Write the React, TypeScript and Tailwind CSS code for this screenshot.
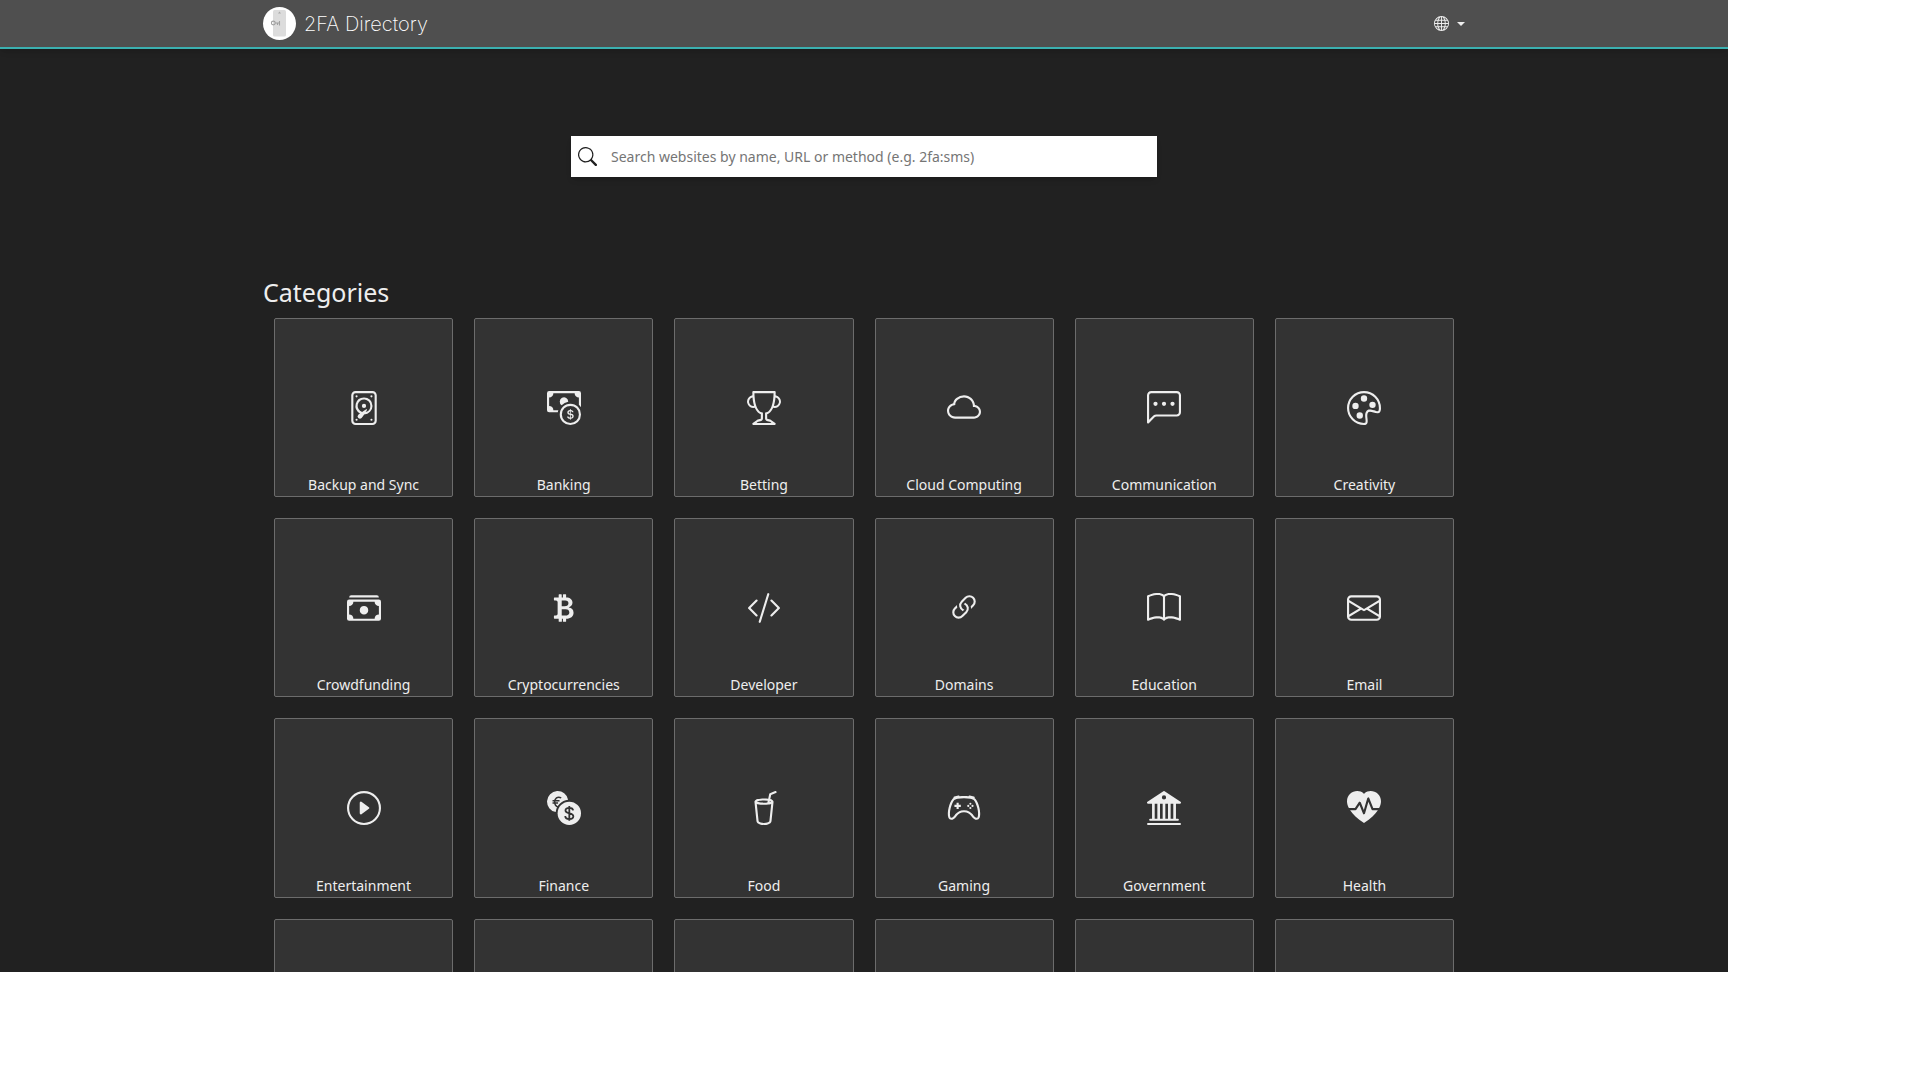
import type { ReactNode } from "react";
import {
  BsBank2,
  BsBook,
  BsCashCoin,
  BsCashStack,
  BsChatLeftDots,
  BsCloud,
  BsCodeSlash,
  BsController,
  BsCupStraw,
  BsCurrencyBitcoin,
  BsDeviceHdd,
  BsEnvelope,
  BsGlobe,
  BsHeartPulseFill,
  BsLink45Deg,
  BsPalette,
  BsPlayCircle,
  BsSearch,
  BsTrophy,
} from "react-icons/bs";

function Logo() {
  return (
    <svg viewBox="0 0 33 33" className="size-[33px]" aria-hidden="true">
      <circle cx="16.5" cy="16.5" r="16.5" fill="#fff" />
      <rect x="10" y="3" width="13" height="26.5" rx="1.5" fill="#dcdcdc" />
      <path d="M15 6.5h3l-1.5-2z" fill="#aaa" />
      <g fill="none" stroke="#a0a0a0" strokeWidth="1.1">
        <circle cx="10.3" cy="16" r="1.9" />
        <path d="M12.2 16h4.8M14.5 16v2M16.5 14v4.5" />
      </g>
    </svg>
  );
}

function Coins() {
  return (
    <svg viewBox="0 0 16 16" className="size-[1em]" fill="currentColor" aria-hidden="true">
      <path d="M9.93 4.1A5 5 0 1 0 4.1 9.93A6.45 6.45 0 0 1 9.93 4.1Z" />
      <circle cx="10.5" cy="10.5" r="5.5" />
      <g fill="none" stroke="#333" strokeWidth=".7">
        <path d="M6.7 3.25C4.9 2.3 3.6 3.6 3.6 5.1c0 1.3.7 2.2 1.7 2.5M2.6 4.6h3.3M2.6 5.6h2.6" />
        <path
          strokeWidth=".85"
          d="M12.3 9.1c-.1-.8-.8-1.2-1.8-1.2s-1.8.5-1.8 1.3c0 .9.9 1.1 1.8 1.3s1.9.4 1.9 1.4c0 .8-.8 1.3-1.9 1.3s-1.9-.5-1.9-1.4M10.5 7v7"
        />
      </g>
    </svg>
  );
}

const categories: { name: string; icon: ReactNode }[] = [
  { name: "Backup and Sync", icon: <BsDeviceHdd /> },
  { name: "Banking", icon: <BsCashCoin /> },
  { name: "Betting", icon: <BsTrophy /> },
  { name: "Cloud Computing", icon: <BsCloud /> },
  { name: "Communication", icon: <BsChatLeftDots /> },
  { name: "Creativity", icon: <BsPalette /> },
  { name: "Crowdfunding", icon: <BsCashStack /> },
  { name: "Cryptocurrencies", icon: <BsCurrencyBitcoin /> },
  { name: "Developer", icon: <BsCodeSlash /> },
  { name: "Domains", icon: <BsLink45Deg /> },
  { name: "Education", icon: <BsBook /> },
  { name: "Email", icon: <BsEnvelope /> },
  { name: "Entertainment", icon: <BsPlayCircle /> },
  { name: "Finance", icon: <Coins /> },
  { name: "Food", icon: <BsCupStraw /> },
  { name: "Gaming", icon: <BsController /> },
  { name: "Government", icon: <BsBank2 /> },
  { name: "Health", icon: <BsHeartPulseFill /> },
];

const upcoming = [1, 2, 3, 4, 5, 6];

export default function App() {
  return (
    <div className="min-h-screen bg-white">
      <div className="flex h-[90vh] w-[90%] flex-col overflow-hidden bg-[#212121] font-['Noto_Sans',sans-serif] text-[#eee]">
        <header className="z-10 shrink-0 border-b-2 border-[#3bb0b0] bg-[#4f4f4f] shadow-md">
          <div className="mx-auto flex h-[47px] max-w-[1202px] items-center justify-between">
            <a href="#home" className="flex items-center gap-2">
              <Logo />
              <span className="font-[Inter,sans-serif] text-xl font-extralight text-white">2FA Directory</span>
            </a>
            <button type="button" aria-label="Language" className="flex items-center gap-2">
              <BsGlobe className="size-[15px]" />
              <svg viewBox="0 0 8 4" className="h-1 w-2" fill="currentColor" aria-hidden="true">
                <path d="M0 0h8L4 4z" />
              </svg>
            </button>
          </div>
        </header>

        <main className="mx-auto w-full max-w-[1202px]">
          <form role="search" className="mx-auto mt-[87px] flex h-[41px] max-w-[586px] items-center bg-white shadow-md">
            <label htmlFor="search" className="pl-[7px] text-[#212121]">
              <BsSearch className="size-[19px]" aria-label="Search" />
            </label>
            <input
              id="search"
              type="text"
              placeholder="Search websites by name, URL or method (e.g. 2fa:sms)"
              className="h-full min-w-0 flex-1 bg-transparent px-[14px] text-sm text-[#212121] outline-none placeholder:text-[#757575]"
            />
          </form>

          <h1 className="mt-[99px] text-[25px] leading-8">Categories</h1>
          <div className="mx-[11px] mt-[10px] grid grid-cols-6 gap-[21px]">
            {categories.map(({ name, icon }) => (
              <a
                key={name}
                href={"#" + name}
                className="grid aspect-square grid-rows-[1fr_auto_1fr] justify-items-center rounded-xs border border-[#6c6c6c] bg-[#333]"
              >
                <span className="row-start-2 text-[34px]">{icon}</span>
                <span className="row-start-3 self-end text-sm leading-[22px]">{name}</span>
              </a>
            ))}
            {upcoming.map((n) => (
              <div key={n} className="aspect-square rounded-xs border border-[#6c6c6c] bg-[#333]" />
            ))}
          </div>
        </main>
      </div>
    </div>
  );
}
